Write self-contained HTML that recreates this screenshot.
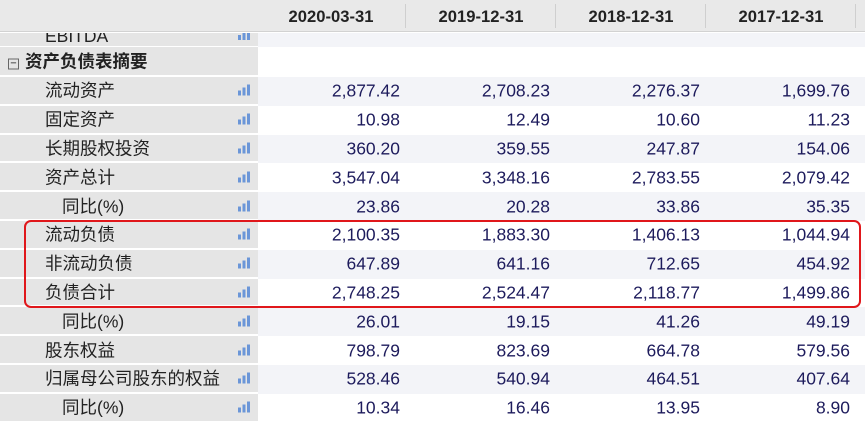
<!DOCTYPE html><html><head><meta charset="utf-8"><style>
*{margin:0;padding:0;box-sizing:border-box}
body{width:865px;height:427px;overflow:hidden;background:#fff;font-family:"Liberation Sans","Noto Sans CJK SC",sans-serif;position:relative}
.hdr{position:absolute;left:0;top:0;width:865px;height:32px;background:#e9e9e9;border-bottom:1px solid #d2d2d2;z-index:2}
.hc{position:absolute;top:0;height:31px;line-height:33px;font-weight:bold;font-size:16.6px;color:#222;text-align:center;width:150px;z-index:3}
.hs{position:absolute;top:4px;width:1px;height:24px;background:#cfcfcf;z-index:3}
.row{position:absolute;left:0;width:865px}
.lab{position:absolute;left:0;top:0;width:258px;bottom:2px;background:#e5e5e5;font-size:17.5px;color:#222;overflow:hidden}
.lab .t{position:absolute;top:50%;transform:translateY(-50%);white-space:nowrap}
.dat{position:absolute;left:258px;right:0;top:0;bottom:0}
.sh .dat{background:#f3f4f8}
.n{position:absolute;top:50%;transform:translateY(-50%);font-size:17.5px;color:#1d1b5c;text-align:right;width:140px}
.ic{position:absolute;left:238px;top:50%;transform:translateY(-50%);width:12px;height:11px}
.box{position:absolute;left:24px;top:220px;width:837px;height:88px;border:2.5px solid #e0171b;border-radius:7px}
.pm{display:inline-block;width:11px;height:11px;border:1px solid #666;font-size:11px;line-height:8px;text-align:center;font-weight:normal;margin-right:6px;vertical-align:1px}
</style></head><body>
<div class="hdr"></div>
<div class="hc" style="left:256px">2020-03-31</div>
<div class="hc" style="left:406px">2019-12-31</div>
<div class="hc" style="left:556px">2018-12-31</div>
<div class="hc" style="left:706px">2017-12-31</div>
<div class="hs" style="left:405px"></div><div class="hs" style="left:555px"></div><div class="hs" style="left:705px"></div><div class="hs" style="left:855px"></div>
<div id="rows"></div>
<div class="box"></div>
<script>
var ic='<svg class="ic" viewBox="0 0 12 11"><rect x="0" y="6" width="3" height="5" fill="#6b96d8"/><rect x="4.5" y="3" width="3" height="8" fill="#6b96d8"/><rect x="9" y="0" width="3" height="11" fill="#6b96d8"/></svg>';
var data=[
["流动资产",45,"2,877.42","2,708.23","2,276.37","1,699.76"],
["固定资产",45,"10.98","12.49","10.60","11.23"],
["长期股权投资",45,"360.20","359.55","247.87","154.06"],
["资产总计",45,"3,547.04","3,348.16","2,783.55","2,079.42"],
["同比(%)",62,"23.86","20.28","33.86","35.35"],
["流动负债",45,"2,100.35","1,883.30","1,406.13","1,044.94"],
["非流动负债",45,"647.89","641.16","712.65","454.92"],
["负债合计",45,"2,748.25","2,524.47","2,118.77","1,499.86"],
["同比(%)",62,"26.01","19.15","41.26","49.19"],
["股东权益",45,"798.79","823.69","664.78","579.56"],
["归属母公司股东的权益",45,"528.46","540.94","464.51","407.64"],
["同比(%)",62,"10.34","16.46","13.95","8.90"]];
var h='';
h+='<div class="row sh" style="top:33px;height:14px"><div class="lab" style="bottom:1px"><div class="t" style="left:45px;top:0px;transform:translateY(-7px);font-size:17.5px">EBITDA</div><svg class="ic" viewBox="0 0 12 11" style="top:0;transform:translateY(-4px)"><rect x="0" y="6" width="3" height="5" fill="#6b96d8"/><rect x="4.5" y="3" width="3" height="8" fill="#6b96d8"/><rect x="9" y="0" width="3" height="11" fill="#6b96d8"/></svg></div><div class="dat"></div></div>';
h+='<div class="row" style="top:47px;height:30px"><div class="lab"><div class="t" style="left:8px;font-weight:bold;font-size:17.5px"><span class="pm">−</span>资产负债表摘要</div></div><div class="dat"></div></div>';
for(var i=0;i<data.length;i++){var d=data[i];var tp=77+i*28.8;
h+='<div class="row'+(i%2==0?' sh':'')+'" style="top:'+tp+'px;height:28.8px"><div class="lab"><div class="t" style="left:'+d[1]+'px">'+d[0]+'</div>'+ic+'</div><div class="dat">';
for(var j=0;j<4;j++)h+='<div class="n" style="left:'+(2+j*150)+'px">'+d[2+j]+'</div>';
h+='</div></div>';}
document.getElementById('rows').innerHTML=h;
</script>
</body></html>
